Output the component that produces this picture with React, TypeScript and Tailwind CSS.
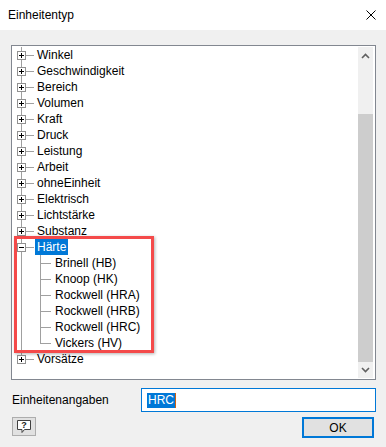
import type { ReactNode } from "react";

const groups = [
  "Winkel",
  "Geschwindigkeit",
  "Bereich",
  "Volumen",
  "Kraft",
  "Druck",
  "Leistung",
  "Arbeit",
  "ohneEinheit",
  "Elektrisch",
  "Lichtstärke",
  "Substanz",
];

const hardness = ["Brinell (HB)", "Knoop (HK)", "Rockwell (HRA)", "Rockwell (HRB)", "Rockwell (HRC)", "Vickers (HV)"];

function Expander({ open }: { open?: boolean }) {
  return (
    <span className="absolute left-[5px] top-[4px] w-[9px] h-[9px] border border-[#919191] bg-white">
      <span className="absolute left-[1px] top-[3px] w-[5px] h-px bg-black" />
      {!open && <span className="absolute left-[3px] top-[1px] w-px h-[5px] bg-black" />}
    </span>
  );
}

function Row({ children, child, last, lastChild }: { children: ReactNode; child?: boolean; last?: boolean; lastChild?: boolean }) {
  return (
    <div className={`relative h-[16px] leading-[16px] ${child ? "pl-[41px]" : "pl-[23px]"}`}>
      {/* root line */}
      <span className={`absolute left-[9px] top-0 w-px bg-[#a0a0a0] ${last ? "h-[8px]" : "h-[16px]"}`} />
      {child ? (
        <>
          <span className={`absolute left-[28px] top-0 w-px bg-[#a0a0a0] ${lastChild ? "h-[8px]" : "h-[16px]"}`} />
          <span className="absolute left-[28px] top-[8px] w-[11px] h-px bg-[#a0a0a0]" />
        </>
      ) : (
        <span className="absolute left-[14px] top-[8px] w-[8px] h-px bg-[#a0a0a0]" />
      )}
      {children}
    </div>
  );
}

export default function App() {
  return (
    <div className="w-[386px] h-[447px] bg-[#f0f0f0] flex flex-col text-[12px] text-black font-['Liberation_Sans',Arial,sans-serif] overflow-hidden">
      {/* Title bar */}
      <div className="h-[30px] shrink-0 bg-white flex items-center justify-between pl-[8px] pr-[10px]">
        <span className="leading-none">Einheitentyp</span>
        <svg width="10" height="10" viewBox="0 0 10 10">
          <path d="M0.5 0.5 L9.5 9.5 M9.5 0.5 L0.5 9.5" stroke="#000" strokeWidth="1" />
        </svg>
      </div>

      <div className="flex flex-col pl-[11px] pr-[10px] pt-[15px]">
        {/* Tree box */}
        <div className="relative h-[335px] w-[365px] border border-[#828790] bg-white flex">
          <div className="relative flex-1 pt-[1px]">
            {groups.map((g) => (
              <Row key={g}>
                <Expander />
                <span className="px-[2px]">{g}</span>
              </Row>
            ))}
            <Row>
              <Expander open />
              <span className="inline-block px-[2px] bg-[#0078d7] text-white">Härte</span>
            </Row>
            {hardness.map((h, i) => (
              <Row key={h} child lastChild={i === hardness.length - 1}>
                <span className="px-[2px]">{h}</span>
              </Row>
            ))}
            <Row last>
              <Expander />
              <span className="px-[2px]">Vorsätze</span>
            </Row>

            {/* Annotation */}
            <div className="absolute left-[2px] top-[190px] w-[140px] h-[117px] border-[3px] border-[#f44a4a] shadow-[1px_1px_3px_rgba(0,0,0,0.3)] pointer-events-none" />
          </div>

          {/* Scrollbar */}
          <div className="w-[15px] mr-[2px] my-[1px] bg-[#f0f0f0] flex flex-col">
            <div className="h-[17px] flex items-center justify-center">
              <svg width="9" height="6" viewBox="0 0 9 6">
                <path d="M1 5 L4.5 1.5 L8 5" stroke="#606060" strokeWidth="1.6" fill="none" />
              </svg>
            </div>
            <div className="h-[50px]" />
            <div className="h-[248px] bg-[#cdcdcd]" />
            <div className="flex-1 flex items-center justify-center">
              <svg width="9" height="6" viewBox="0 0 9 6">
                <path d="M1 1 L4.5 4.5 L8 1" stroke="#606060" strokeWidth="1.6" fill="none" />
              </svg>
            </div>
          </div>
        </div>

        {/* Units row */}
        <div className="mt-[8px] flex items-center">
          <span className="w-[130px] pl-[1px]">Einheitenangaben</span>
          <div className="w-[235px] h-[24px] border border-[#0078d7] bg-white flex items-center pl-[5px]">
            <span className="bg-[#0078d7] text-white leading-[15px] px-px">HRC</span>
            <span className="w-px h-[15px] bg-[#d06010]" />
          </div>
        </div>

        {/* Buttons */}
        <div className="mt-[5px] flex items-start justify-between pr-[2px]">
          <button className="ml-[1px] w-[24px] h-[19px] border border-[#adadad] bg-[#e1e1e1] flex items-center justify-center">
            <svg width="16" height="15" viewBox="0 0 16 15">
              <path d="M1.5 1.5 H14.5 V10.5 H8.5 L6 13.5 V10.5 H1.5 Z" fill="#fff" stroke="#404040" strokeWidth="1" />
              <text x="8" y="9" textAnchor="middle" fontSize="9" fontWeight="bold" fontFamily="Liberation Sans, Arial, sans-serif" fill="#202020">?</text>
            </svg>
          </button>
          <button className="w-[72px] h-[21px] border-2 border-[#0078d7] bg-[#e1e1e1] flex items-center justify-center leading-none">
            OK
          </button>
        </div>
      </div>
    </div>
  );
}
